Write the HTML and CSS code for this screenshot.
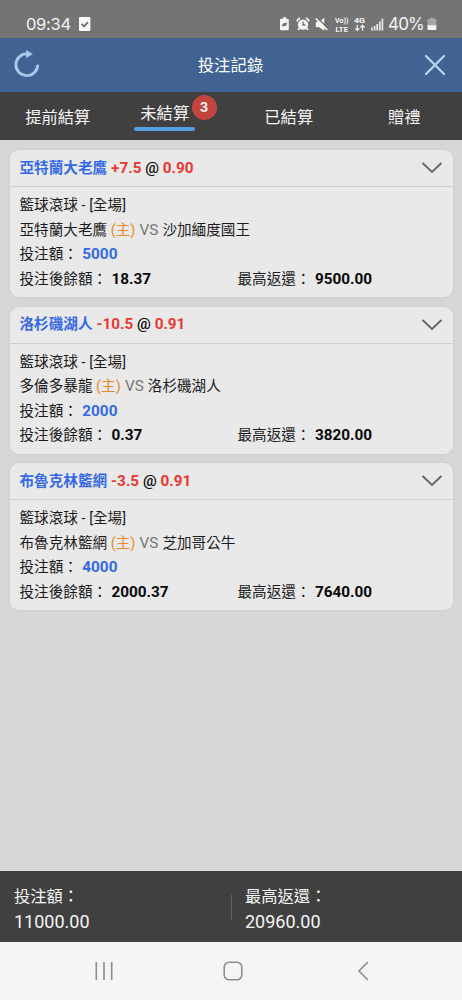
FILE: index.html
```html
<!DOCTYPE html>
<html lang="zh-Hant">
<head>
<meta charset="utf-8">
<meta name="viewport" content="width=device-width">
<title>投注記錄</title>
<link rel="stylesheet" href="styles.css">
</head>
<body>
<div class="app">
  <div class="status">
    <span class="clock">09:34</span>
    <svg class="check" width="12" height="14" viewBox="0 0 12 14"><rect width="11.4" height="14" rx="1" fill="#f7f7f7"/><path d="M2.600 6.800l2.500 2.600L9 5.200" fill="none" stroke="#6e6e6e" stroke-width="1.700"/></svg>
    <svg class="signals" width="106" height="18" viewBox="0 0 106 18">
      <g fill="#f5f5f5">
        <path d="M4 2.300h3v1.500h1.600q1.200 0 1.200 1.200v9q0 1.200-1.200 1.200H2.200Q1 15.200 1 14V5q0-1.200 1.200-1.200H4z"/>
        <circle cx="24" cy="9.600" r="5.200"/>
        <path d="M17.800 6.400a6.500 6.500 0 0 1 3.200-3.300M27 3.100a6.500 6.500 0 0 1 3.200 3.300M20.500 13l-1.500 2M27.500 13l1.500 2" fill="none" stroke="#f5f5f5" stroke-width="1.700"/>
        <path d="M36.800 7h3l5.500-4.300v13L39.800 12h-3z"/>
      </g>
      <path d="M3 11q0-3.500 5-3.300q0 4-4 3.500" fill="#747474"/>
      <path d="M24 6.600v3.400h2.500" fill="none" stroke="#747474" stroke-width="1.300"/>
      <path d="M38 2.500l11 11" stroke="#747474" stroke-width="1.500"/>
      <path d="M36.800 3.500l11.500 11.500" stroke="#f5f5f5" stroke-width="1.700"/>
      <g class="tiny" fill="#f5f5f5">
        <text x="56" y="7.800" textLength="13.500" lengthAdjust="spacingAndGlyphs">Vo))</text>
        <text x="56.500" y="16.500" textLength="12.500" lengthAdjust="spacingAndGlyphs">LTE</text>
        <text x="75" y="7.800" textLength="11" lengthAdjust="spacingAndGlyphs">4G</text>
      </g>
      <path d="M78.300 10v5.400M76.200 13.300l2.100 2.200 2.100-2.200M83.500 15.800v-5.400M81.400 12.500l2.100-2.200 2.100 2.200" fill="none" stroke="#f5f5f5" stroke-width="1.200"/>
      <path d="M93 15.500v-3M95.600 15.500v-4.500M98.200 15.500v-6.500M100.800 15.500v-9M103.400 15.500v-12" stroke="#e8e8e8" stroke-width="1.700"/>
    </svg>
    <span class="percent">40%</span>
    <svg class="battery" width="10" height="14" viewBox="0 0 10 14"><path d="M3 .7h4v1.300h1.300q1 0 1 1V9H.5V3q0-1 1-1H3z" fill="#a5a5a5"/><path d="M.5 8.300h8.800v3.700q0 1-1 1H1.500q-1 0-1-1z" fill="#fafafa"/></svg>
  </div>
  <header class="titlebar">
    <svg width="28" height="30" viewBox="0 0 28 30"><path d="M14.500 3.800A10.900 10.900 0 1 0 24.700 14.700" fill="none" stroke="#a9c8ec" stroke-width="2.900"/><path d="M13.200 0v8.300L19.800 4z" fill="#a9c8ec"/></svg>
    <h1 class="title">投注記錄</h1>
    <svg width="22" height="22" viewBox="0 0 22 22"><path d="M2 2l18 18M20 2L2 20" fill="none" stroke="#bad5f3" stroke-width="2.300" stroke-linecap="round"/></svg>
  </header>
  <nav class="tabs">
    <span class="tab">提前結算</span>
    <span class="tab active"><span class="label">未結算</span><b class="badge">3</b></span>
    <span class="tab">已結算</span>
    <span class="tab">贈禮</span>
  </nav>
  <main class="list">
    <section class="card">
      <div class="head"><span><b class="blue">亞特蘭大老鷹</b> <span class="num"><b class="red">+7.5</b> <span class="at">@</span> <b class="red">0.90</b></span></span><svg width="22" height="14" viewBox="0 0 22 14"><path d="M1.500 2l9.500 9L20.500 2" fill="none" stroke="#666" stroke-width="1.900"/></svg></div>
      <div class="body">
        <div class="row">籃球滾球 - [全場]</div>
        <div class="row">亞特蘭大老鷹 <span class="home">(主)</span> <span class="vs">VS</span> 沙加緬度國王</div>
        <div class="row">投注額： <b class="num blue">5000</b></div>
        <div class="row split"><span>投注後餘額： <b class="num">18.37</b></span><span>最高返還： <b class="num">9500.00</b></span></div>
      </div>
    </section>
    <section class="card">
      <div class="head"><span><b class="blue">洛杉磯湖人</b> <span class="num"><b class="red">-10.5</b> <span class="at">@</span> <b class="red">0.91</b></span></span><svg width="22" height="14" viewBox="0 0 22 14"><path d="M1.500 2l9.500 9L20.500 2" fill="none" stroke="#666" stroke-width="1.900"/></svg></div>
      <div class="body">
        <div class="row">籃球滾球 - [全場]</div>
        <div class="row">多倫多暴龍 <span class="home">(主)</span> <span class="vs">VS</span> 洛杉磯湖人</div>
        <div class="row">投注額： <b class="num blue">2000</b></div>
        <div class="row split"><span>投注後餘額： <b class="num">0.37</b></span><span>最高返還： <b class="num">3820.00</b></span></div>
      </div>
    </section>
    <section class="card">
      <div class="head"><span><b class="blue">布魯克林籃網</b> <span class="num"><b class="red">-3.5</b> <span class="at">@</span> <b class="red">0.91</b></span></span><svg width="22" height="14" viewBox="0 0 22 14"><path d="M1.500 2l9.500 9L20.500 2" fill="none" stroke="#666" stroke-width="1.900"/></svg></div>
      <div class="body">
        <div class="row">籃球滾球 - [全場]</div>
        <div class="row">布魯克林籃網 <span class="home">(主)</span> <span class="vs">VS</span> 芝加哥公牛</div>
        <div class="row">投注額： <b class="num blue">4000</b></div>
        <div class="row split"><span>投注後餘額： <b class="num">2000.37</b></span><span>最高返還： <b class="num">7640.00</b></span></div>
      </div>
    </section>
  </main>
  <footer class="totals">
    <div class="total"><span>投注額：</span><span class="amount">11000.00</span></div>
    <div class="divider"></div>
    <div class="total"><span>最高返還：</span><span class="amount">20960.00</span></div>
  </footer>
  <div class="sysnav">
    <svg width="20" height="20" viewBox="0 0 20 20"><path d="M2.300 1v18M10 1v18M17.700 1v18" stroke="#8e8e90" stroke-width="1.600"/></svg>
    <svg width="20" height="20" viewBox="0 0 20 20"><rect x="1.200" y="1.200" width="17.600" height="17.600" rx="5" fill="none" stroke="#8e8e90" stroke-width="1.600"/></svg>
    <svg width="12" height="20" viewBox="0 0 12 20"><path d="M11 1L2 10l9 9" fill="none" stroke="#8e8e90" stroke-width="1.600"/></svg>
  </div>
</div>
</body>
</html>
```
FILE: styles.css
```css
* { box-sizing: border-box; }
body { margin: 0; font-family: Roboto, "Noto Sans CJK TC", sans-serif; }
svg { display: block; flex: none; }
.app { width: 462px; height: 1000px; display: flex; flex-direction: column; background: #d7d7d7; overflow: hidden; }
.status { height: 38px; flex: none; display: flex; align-items: center; padding: 10px 24px 0 26px; background: #747474; color: #f5f5f5; }
.clock { font: 400 16.500px/20px Inter, sans-serif; width: 53px; letter-spacing: -.3px; }
.signals { margin-left: 188px; }
.tiny { font: 700 7px Roboto, sans-serif; }
.percent { font: 400 17px/20px Inter, sans-serif; width: 36px; margin-left: 3px; letter-spacing: -.8px; }
.battery { margin-left: 3px; }
.titlebar { height: 54px; flex: none; display: flex; align-items: center; justify-content: space-between; padding: 0 16px 0 13px; background: #406394; color: #fff; }
.title { margin: 0; padding: 1px 4px 0 0; font-size: 16.400px; line-height: 24px; font-weight: 400; }
.tabs { height: 48px; flex: none; display: grid; grid-template-columns: repeat(4, 1fr); background: #404040; color: #f5f5f5; font-size: 16.300px; line-height: 24px; }
.tab { display: flex; justify-content: center; padding-top: 14px; }
.active { position: relative; padding-top: 10px; padding-right: 17px; }
.label { width: 61px; height: 29px; text-align: center; }
.label::after { content: ""; display: block; height: 4px; margin-top: 1px; border-radius: 2px; background: #539fe2; }
.badge { position: absolute; left: 76px; top: 3px; width: 25px; height: 25px; border-radius: 50%; background: #c24440; font: 700 13px/25px Inter, sans-serif; text-align: center; }
.list { flex: 1; display: flex; flex-direction: column; gap: 9.700px; padding: 10px 9px 0 10px; }
.card { height: 147px; flex: none; border-radius: 9px; background: #e9e9e9; color: #1c1c1c; font-size: 14.600px; line-height: 24.500px; box-shadow: 0 0 4px rgba(0, 0, 0, .05); white-space: nowrap; }
.head { height: 37px; display: flex; align-items: center; justify-content: space-between; padding: 0 10px 0 9.500px; border-bottom: 1px solid #cecece; }
.head .num { margin-left: .4px; }
.body { padding: 6px 10px 0 9.500px; }
.row { height: 24.500px; }
.split { display: grid; grid-template-columns: 218px 1fr; }
.num { font-size: 15.300px; color: #080808; }
.row .num { margin-left: .8px; }
.blue, .row .blue { color: #356ae6; }
.red { color: #e93731; }
.at { font-weight: 500; }
.home { color: #e98b2c; }
.vs { color: #777; font-size: 15.300px; margin: 0 .5px; }
.totals { height: 71px; flex: none; display: flex; align-items: center; background: #404040; color: #f5f5f5; }
.total { width: 231px; display: flex; flex-direction: column; padding: 6.500px 0 0 14px; font-size: 16.300px; line-height: 24.500px; }
.divider { width: 1px; height: 25px; margin: 1px -1px 0 0; background: #636363; }
.amount { font-size: 18px; }
.sysnav { height: 58px; flex: none; display: grid; grid-template-columns: 130px 130px 12px; justify-items: start; align-items: center; padding-left: 94px; background: #f5f5f7; }
.sysnav svg:nth-child(2) { margin-left: -1px; }
.sysnav svg:nth-child(3) { margin-left: 3px; }
```
